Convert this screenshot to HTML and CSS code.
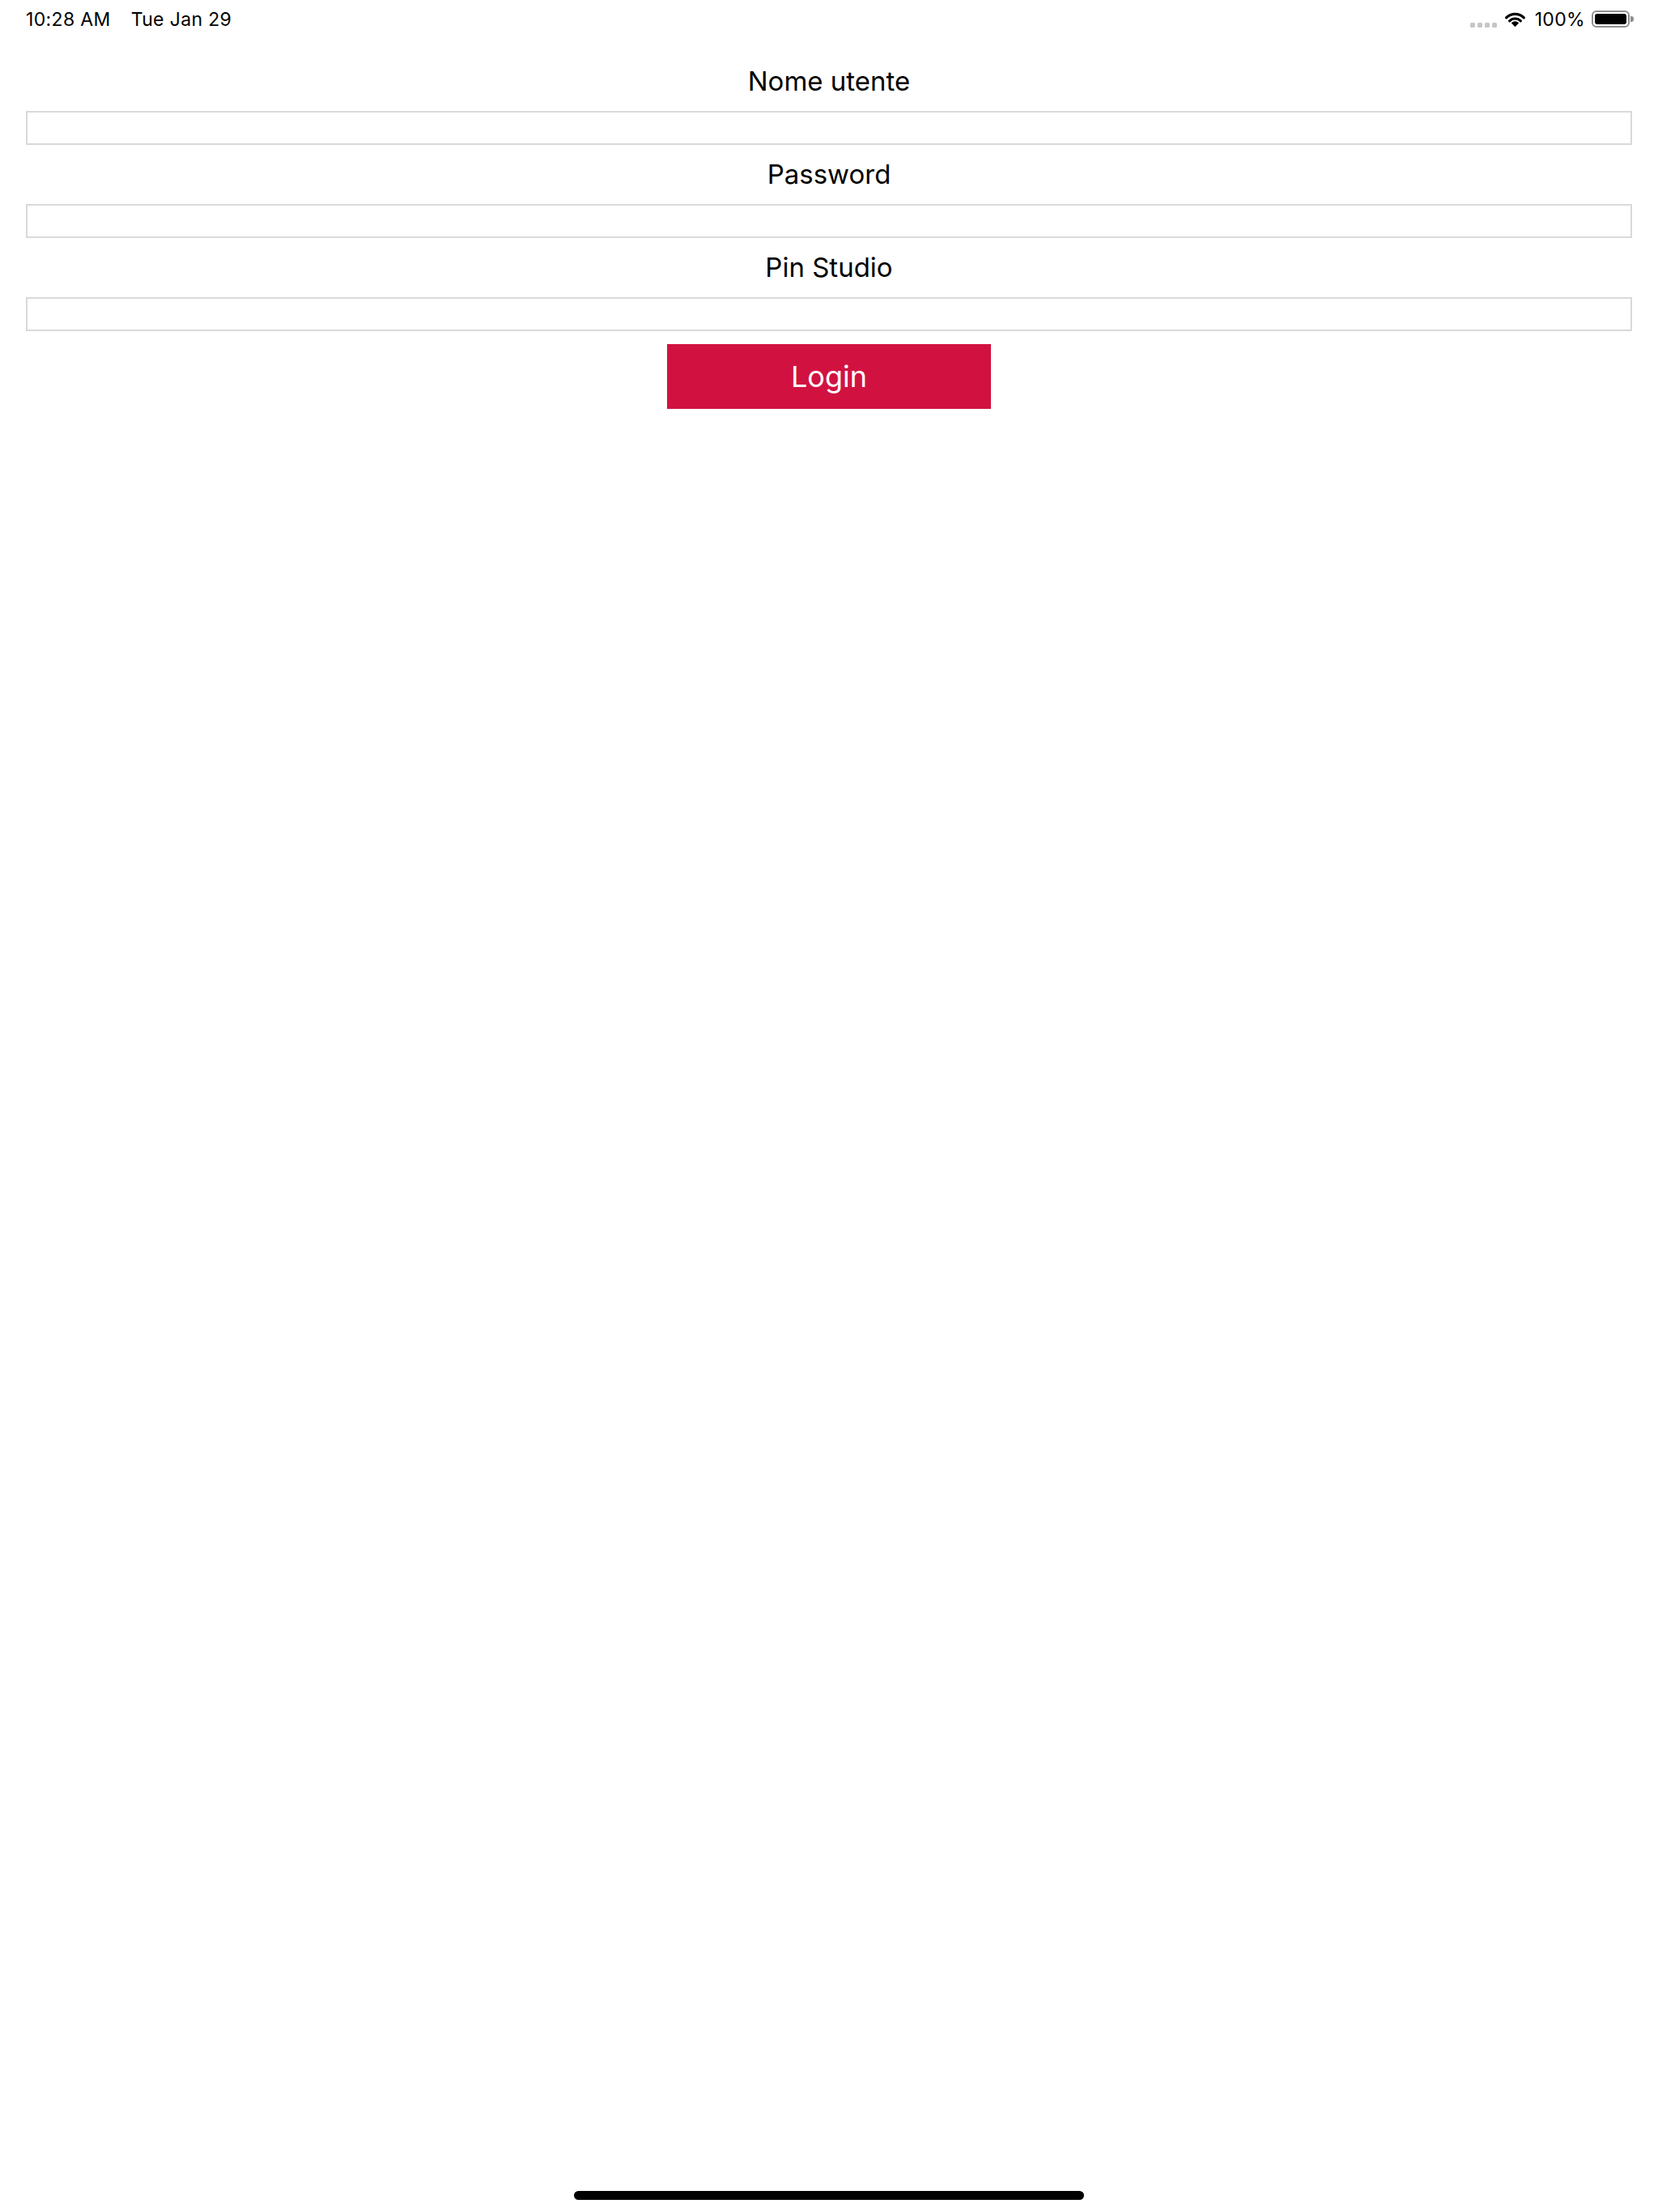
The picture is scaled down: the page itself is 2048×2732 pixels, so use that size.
FILE: index.html
```html
<!DOCTYPE html>
<html lang="it">
<head>
<meta charset="utf-8">
<title>Login</title>
<link rel="stylesheet" href="styles.css">
</head>
<body>
<div class="screen">
  <header class="status-bar">
    <span class="time">10:28 AM</span>
    <span class="date">Tue Jan 29</span>
    <div class="status-right">
      <div class="signal">
        <span class="dot"></span><span class="dot"></span><span class="dot"></span><span class="dot"></span>
      </div>
      <svg class="wifi" width="25" height="19" viewBox="0 0 27 20">
        <path d="M1.8 8.3 A16.5 16.5 0 0 1 25.2 8.3" fill="none" stroke="#000" stroke-width="3.4" stroke-linecap="round"/>
        <path d="M6.1 12.6 A10.3 10.3 0 0 1 20.9 12.6" fill="none" stroke="#000" stroke-width="3.4" stroke-linecap="round"/>
        <path d="M13.5 19.6 L9.3 15.3 A5.9 5.9 0 0 1 17.7 15.3 Z" fill="#000" stroke="#000" stroke-width="1.2" stroke-linejoin="round"/>
      </svg>
      <span class="battery-text">100%</span>
      <div class="battery">
        <div class="battery-body"><div class="battery-fill"></div></div>
        <div class="battery-nub"></div>
      </div>
    </div>
  </header>

  <main class="login-form">
    <label class="field-label" for="user">Nome utente</label>
    <input class="field-input" id="user" type="text">
    <label class="field-label" for="pass">Password</label>
    <input class="field-input" id="pass" type="password">
    <label class="field-label" for="pin">Pin Studio</label>
    <input class="field-input" id="pin" type="text">
    <button class="login-button" type="button">Login</button>
  </main>

  <div class="home-indicator"></div>
</div>
</body>
</html>
```
FILE: styles.css
```css
html, body {
  margin: 0;
  padding: 0;
  background: #ffffff;
}

body {
  font-family: Inter, "Noto Sans", "Liberation Sans", sans-serif;
  color: #000;
}

.screen {
  width: 2048px;
  height: 2732px;
  display: flex;
  flex-direction: column;
  box-sizing: border-box;
}

/* Status bar */
.status-bar {
  height: 64px;
  display: flex;
  align-items: flex-start;
  padding: 0 30px 0 32px;
  box-sizing: border-box;
  font-size: 23px;
  line-height: 28px;
  letter-spacing: 0.35px;
}

.time, .date, .battery-text {
  margin-top: 10px;
}

.date {
  margin-left: 25px;
}

.status-right {
  margin-left: auto;
  display: flex;
  align-items: flex-start;
}

.signal {
  display: flex;
  gap: 3px;
  margin-top: 28px;
}

.dot {
  width: 6px;
  height: 6px;
  border-radius: 1.5px;
  background: #c6c6c6;
}

.wifi {
  display: block;
  margin-left: 10px;
  margin-top: 14px;
}

.battery-text {
  margin-left: 12px;
}

.battery {
  display: flex;
  align-items: center;
  margin-left: 8px;
  margin-top: 13px;
}

.battery-body {
  width: 47px;
  height: 21px;
  box-sizing: border-box;
  border: 2px solid #8e8e8e;
  border-radius: 6px;
  padding: 2px;
}

.battery-fill {
  width: 100%;
  height: 100%;
  background: #000;
  border-radius: 3px;
}

.battery-nub {
  width: 4px;
  height: 7px;
  margin-left: 1px;
  background: #8e8e8e;
  border-radius: 0 3px 3px 0;
}

/* Form */
.login-form {
  display: flex;
  flex-direction: column;
  align-items: stretch;
  padding: 0 32px;
}

.field-label {
  display: block;
  text-align: center;
  font-size: 33px;
  line-height: 40px;
  margin-top: 16px;
  margin-bottom: 17px;
}

.field-input {
  display: block;
  margin: 0;
  height: 42px;
  box-sizing: border-box;
  border: 2px solid #d9d9d9;
  border-radius: 0;
  background: #fff;
  outline: none;
  padding: 0 8px;
  font-family: inherit;
  font-size: 28px;
}

.login-button {
  align-self: center;
  margin-top: 16px;
  width: 400px;
  height: 80px;
  border: none;
  border-radius: 0;
  background: #d11241;
  color: #fff;
  font-family: inherit;
  font-size: 36px;
  line-height: 80px;
  padding: 0;
}

/* Home indicator */
.home-indicator {
  margin-top: auto;
  margin-bottom: 15px;
  align-self: center;
  width: 630px;
  height: 11px;
  border-radius: 6px;
  background: #000;
}
```
